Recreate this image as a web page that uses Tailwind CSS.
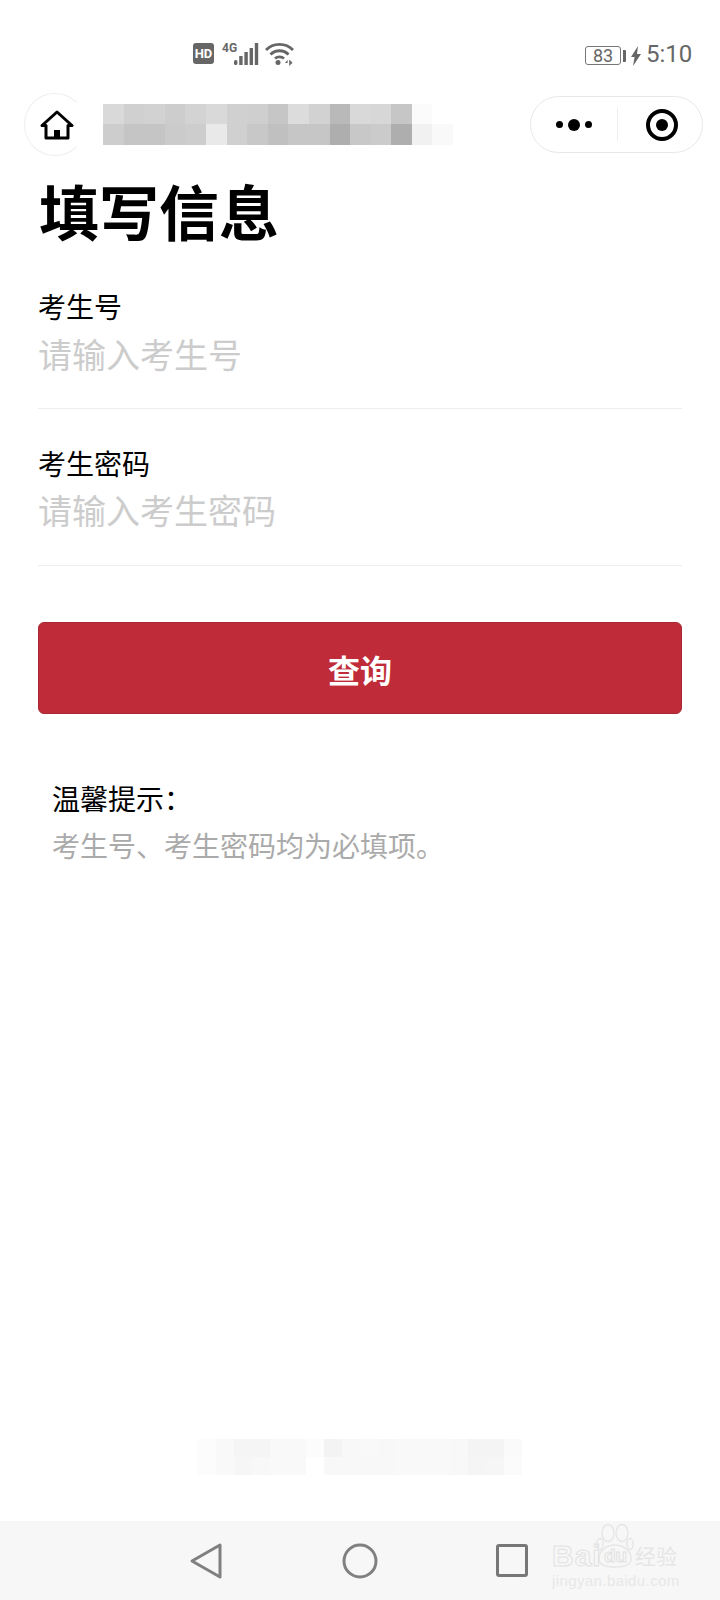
<!DOCTYPE html>
<html lang="zh-CN">
<head>
  <meta charset="UTF-8" />
  <title>填写信息</title>
  <script src="https://cdn.jsdelivr.net/npm/@tailwindcss/browser@4"></script>
</head>
<body class="bg-white w-[720px] h-[1600px] overflow-hidden flex flex-col font-['Noto_Sans_CJK_SC',sans-serif] text-black">
  <!-- Status bar -->
  <div class="h-[93px] shrink-0 flex items-start justify-between pt-[40px] pl-[193px] pr-[28px] text-[#666]">
    <div class="flex items-start">
      <div class="w-[21px] h-[21px] mt-[3px] rounded-[3px] bg-[#666] text-white text-[13px] leading-[21px] font-bold text-center font-['Roboto',sans-serif]">HD</div>
      <div class="ml-[8px] text-[12px] leading-[12px] mt-[2px] font-bold font-['Roboto',sans-serif] w-[13px]">4G</div>
      <svg class="mt-[3px] -ml-[1px]" width="25" height="22" viewBox="0 0 25 22" fill="#666">
        <rect x="0" y="17" width="3.4" height="5" rx="1.5"/><rect x="5.2" y="13" width="3.4" height="9"/><rect x="10.4" y="9" width="3.4" height="13"/><rect x="15.6" y="5" width="3.4" height="17"/><rect x="20.8" y="0" width="3.4" height="22"/>
      </svg>
      <svg class="ml-[6px] mt-[1px]" width="29" height="25" viewBox="0 0 29 25" fill="none" stroke="#666" stroke-width="2.8">
        <path d="M1 9C8 1.5 21 1.5 28 9"/>
        <path d="M5.5 13.5C10.5 8.5 18.5 8.5 23.5 13.5"/>
        <path d="M10 17.5C12.5 15.3 16.5 15.3 19 17.5"/>
        <circle cx="13" cy="21.5" r="2.5" fill="#666" stroke="none"/>
        <path d="M20 22h2.6v-3.2zM24.2 18.5v6.5l3.3-3.2z" fill="#666" stroke="none"/>
      </svg>
    </div>
    <div class="flex items-center">
      <div class="w-[36px] h-[19px] mt-[3px] border border-[#777] rounded-[3px] text-[18px] leading-[17px] text-center font-['Roboto',sans-serif]">83</div>
      <div class="w-[3px] h-[12px] ml-[2px] mt-[3px] bg-[#666] rounded-r-[1px]"></div>
      <svg class="ml-[5px] mt-[3px]" width="10" height="20" viewBox="0 0 10 20" fill="#666"><path d="M7 0L0 11h3.6L2 20l8-12H6z"/></svg>
      <div class="ml-[5px] text-[24px] leading-[28px] font-['Roboto',sans-serif] w-[46px]">5:10</div>
    </div>
  </div>

  <!-- Title bar -->
  <div class="h-[63px] shrink-0 flex items-center pl-[24px] pr-[17px]">
    <div class="w-[62px] h-[63px] rounded-full border border-[#eee] border-r-transparent flex items-center justify-center pl-[3px]">
      <svg width="34" height="30" viewBox="0 0 34 30" fill="none" stroke="#000" stroke-width="3" stroke-linejoin="round">
        <path d="M2 15.5L17 2l15 13.5h-4V28H6V15.5z"/>
        <path d="M14 28v-8h6v8" fill="#000" stroke="none"/>
      </svg>
    </div>
    <!-- blurred app name -->
    <div class="ml-[17px] flex flex-col h-[41px]">
      <div class="flex h-[20px]">
        <div class="w-[21px] bg-[#d9d9d9]"></div><div class="w-[20px] bg-[#d0d0d0]"></div><div class="w-[21px] bg-[#d2d2d2]"></div><div class="w-[20px] bg-[#cdcdcd]"></div><div class="w-[21px] bg-[#d3d3d3]"></div><div class="w-[21px] bg-[#d9d9d9]"></div><div class="w-[20px] bg-[#d0d0d0]"></div><div class="w-[21px] bg-[#cfcfcf]"></div><div class="w-[20px] bg-[#c6c6c6]"></div><div class="w-[21px] bg-[#dcdcdc]"></div><div class="w-[21px] bg-[#d2d2d2]"></div><div class="w-[20px] bg-[#b9b9b9]"></div><div class="w-[21px] bg-[#d9d9d9]"></div><div class="w-[20px] bg-[#d7d7d7]"></div><div class="w-[21px] bg-[#c6c6c6]"></div><div class="w-[20px] bg-[#fbfbfb]"></div>
      </div>
      <div class="flex h-[21px]">
        <div class="w-[21px] bg-[#cdcdcd]"></div><div class="w-[20px] bg-[#c5c5c5]"></div><div class="w-[21px] bg-[#c5c5c5]"></div><div class="w-[20px] bg-[#cbcbcb]"></div><div class="w-[21px] bg-[#cdcdcd]"></div><div class="w-[21px] bg-[#e9e9e9]"></div><div class="w-[20px] bg-[#d0d0d0]"></div><div class="w-[21px] bg-[#c8c8c8]"></div><div class="w-[20px] bg-[#c0c0c0]"></div><div class="w-[21px] bg-[#c6c6c6]"></div><div class="w-[21px] bg-[#c6c6c6]"></div><div class="w-[20px] bg-[#aeaeae]"></div><div class="w-[21px] bg-[#c8c8c8]"></div><div class="w-[20px] bg-[#cbcbcb]"></div><div class="w-[21px] bg-[#aeaeae]"></div><div class="w-[20px] bg-[#f1f1f1]"></div><div class="w-[21px] bg-[#f9f9f9]"></div>
      </div>
    </div>
    <!-- capsule -->
    <div class="ml-auto w-[173px] h-[57px] rounded-full border border-[#e8e8e8] flex items-center">
      <div class="w-[86px] h-full flex items-center justify-center gap-[5px] pr-[1px]">
        <span class="w-[7px] h-[7px] rounded-full bg-black"></span>
        <span class="w-[12px] h-[12px] rounded-full bg-black"></span>
        <span class="w-[7px] h-[7px] rounded-full bg-black"></span>
      </div>
      <div class="w-px h-[33px] bg-[#eee]"></div>
      <div class="flex-1 flex items-center justify-center pl-[3px]">
        <div class="w-[32px] h-[32px] rounded-full border-[4px] border-black flex items-center justify-center">
          <span class="w-[12px] h-[12px] rounded-full bg-black"></span>
        </div>
      </div>
    </div>
  </div>

  <!-- Form -->
  <main class="flex-1 flex flex-col px-[38px] relative">
    <h1 class="text-[60px] leading-[72px] font-bold mt-[18px] pl-px">填写信息</h1>

    <label class="text-[28px] leading-[40px] mt-[40px]">考生号</label>
    <div class="text-[34px] leading-[50px] mt-[3px] text-[#ccc] h-[78px]">请输入考生号</div>
    <div class="h-px bg-[#eee] mt-[1px]"></div>

    <label class="text-[28px] leading-[40px] mt-[34px]">考生密码</label>
    <div class="text-[34px] leading-[50px] mt-[2px] text-[#ccc] h-[79px]">请输入考生密码</div>
    <div class="h-px bg-[#eee] mt-[1px]"></div>

    <button class="mt-[56px] h-[92px] pt-[2px] w-full rounded-[6px] bg-[#bf2b39] border border-[#a82a36] text-white text-[32px] font-bold">查询</button>

    <div class="pl-[14px] mt-[64px]">
      <p class="text-[28px] leading-[40px]">温馨提示：</p>
      <p class="text-[28px] leading-[40px] mt-[7px] text-[#aaa]">考生号、考生密码均为必填项。</p>
    </div>

    <!-- blurred footer text -->
    <div class="mt-auto mb-[46px] ml-[160px] flex flex-col h-[36px]">
      <div class="flex h-[18px]">
        <div class="w-[18px] bg-[#fcfcfc]"></div><div class="w-[18px] bg-[#f9f9f9]"></div><div class="w-[18px] bg-[#f5f5f5]"></div><div class="w-[18px] bg-[#f5f5f5]"></div><div class="w-[18px] bg-[#f9f9f9]"></div><div class="w-[18px] bg-[#f9f9f9]"></div><div class="w-[18px] bg-[#fcfcfc]"></div><div class="w-[18px] bg-[#f3f3f3]"></div><div class="w-[18px] bg-[#f8f8f8]"></div><div class="w-[18px] bg-[#f9f9f9]"></div><div class="w-[18px] bg-[#f8f8f8]"></div><div class="w-[18px] bg-[#f9f9f9]"></div><div class="w-[18px] bg-[#f9f9f9]"></div><div class="w-[18px] bg-[#f9f9f9]"></div><div class="w-[18px] bg-[#f8f8f8]"></div><div class="w-[18px] bg-[#f4f4f4]"></div><div class="w-[18px] bg-[#f4f4f4]"></div><div class="w-[18px] bg-[#fafafa]"></div>
      </div>
      <div class="flex h-[18px]">
        <div class="w-[18px] bg-[#fcfcfc]"></div><div class="w-[18px] bg-[#f9f9f9]"></div><div class="w-[18px] bg-[#f6f6f6]"></div><div class="w-[18px] bg-[#f8f8f8]"></div><div class="w-[18px] bg-[#f9f9f9]"></div><div class="w-[18px] bg-[#f9f9f9]"></div><div class="w-[18px] bg-white"></div><div class="w-[18px] bg-[#f8f8f8]"></div><div class="w-[18px] bg-[#f8f8f8]"></div><div class="w-[18px] bg-[#f8f8f8]"></div><div class="w-[18px] bg-[#f8f8f8]"></div><div class="w-[18px] bg-[#f9f9f9]"></div><div class="w-[18px] bg-[#f9f9f9]"></div><div class="w-[18px] bg-[#f9f9f9]"></div><div class="w-[18px] bg-[#f8f8f8]"></div><div class="w-[18px] bg-[#f5f5f5]"></div><div class="w-[18px] bg-[#f6f6f6]"></div><div class="w-[18px] bg-[#fbfbfb]"></div>
      </div>
    </div>
  </main>

  <!-- Android nav bar -->
  <div class="h-[79px] shrink-0 bg-[#f7f7f7] relative flex items-start pt-[20px] pl-[189px]">
    <svg width="34" height="40" viewBox="0 0 34 40" fill="none" stroke="#808080" stroke-width="3" stroke-linejoin="round"><path d="M31 4L3 20l28 16z"/></svg>
    <svg class="ml-[119px] mt-[2px]" width="36" height="36" viewBox="0 0 36 36" fill="none" stroke="#808080" stroke-width="3"><circle cx="18" cy="18" r="16"/></svg>
    <div class="ml-[118px] mt-[3px] w-[32px] h-[33px] border-[3px] border-[#777] rounded-[3px]"></div>

    <!-- Baidu watermark -->
    <div class="absolute left-[552px] top-0 w-[130px] h-[79px]">
      <svg class="absolute left-[44px] top-[2px]" width="38" height="46" viewBox="0 0 38 46" fill="none" stroke="#e6e6e6" stroke-width="1.4">
        <ellipse cx="12" cy="10" rx="6" ry="8.5"/><ellipse cx="26" cy="10" rx="6" ry="8.5"/><ellipse cx="4" cy="21" rx="3.2" ry="5.5"/><ellipse cx="34" cy="21" rx="3.2" ry="5.5"/>
        <path d="M3 36c0-9 8-14 16-14s16 5 16 14c0 6-7 8-16 8s-16-2-16-8z"/>
      </svg>
      <div class="absolute left-0 top-[17px] text-[30px] leading-[36px] font-bold tracking-[1px] font-['Liberation_Sans',sans-serif] text-transparent [-webkit-text-stroke:1px_#e2e2e2]">Bai</div>
      <div class="absolute left-[52px] top-[25px] text-[19px] leading-[20px] font-bold font-['Liberation_Sans',sans-serif] text-transparent [-webkit-text-stroke:1px_#e2e2e2]">du</div>
      <div class="absolute left-[83px] top-[20px] text-[21px] leading-[28px] text-[#e6e6e6]">经验</div>
      <div class="absolute left-0 top-[50px] text-[15px] leading-[20px] tracking-[.4px] font-['Liberation_Sans',sans-serif] text-[#e8e8e8] whitespace-nowrap">jingyan.baidu.com</div>
    </div>
  </div>
</body>
</html>
